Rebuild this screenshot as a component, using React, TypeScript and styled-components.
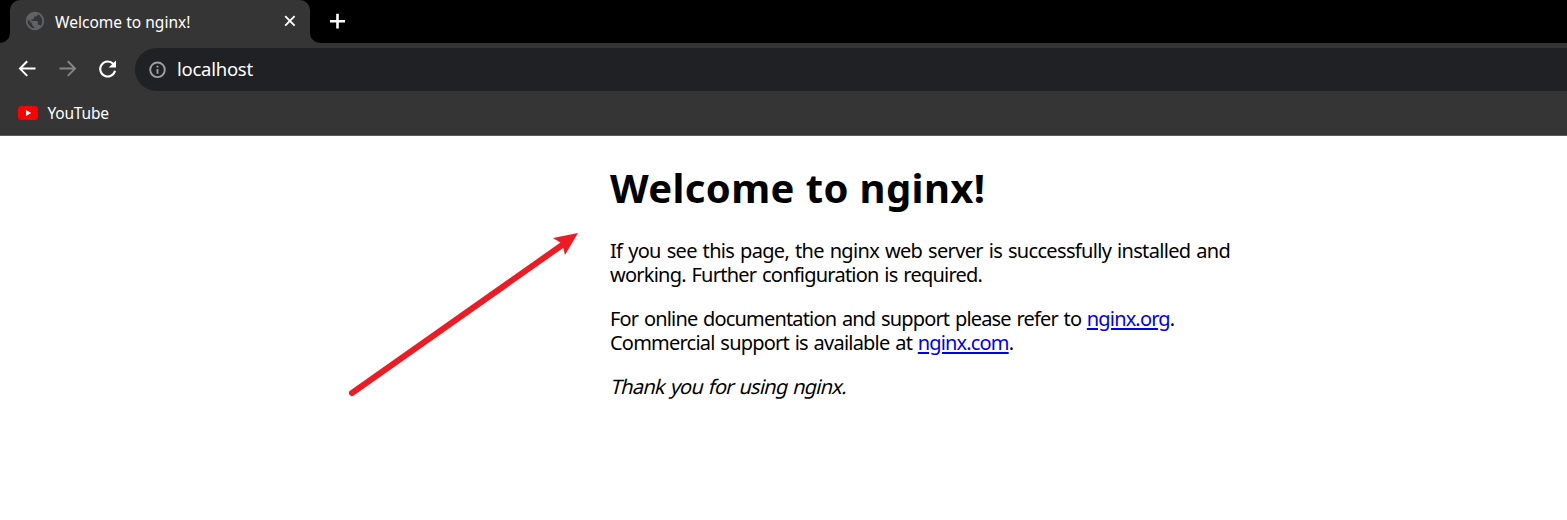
import React from "react";
import styled, { createGlobalStyle } from "styled-components";
import { MdPublic } from "react-icons/md";

const Global = createGlobalStyle`
  html, body { margin: 0; padding: 0; background: #fff; overflow: hidden; }
`;

const Browser = styled.div`
  position: relative;
  width: 100%;
  height: 520px;
  display: flex;
  flex-direction: column;
  background: #fff;
  font-family: "Noto Sans", sans-serif;
`;

const TabStrip = styled.div`
  height: 43px;
  display: flex;
  background: #000;
`;

const TabFoot = styled.svg`
  width: 10px;
  height: 10px;
  align-self: flex-end;
  display: block;
`;

const Tab = styled.div`
  box-sizing: border-box;
  width: 300px;
  height: 43px;
  padding: 0 13px 1px 14px;
  display: flex;
  align-items: center;
  background: #353535;
  border-radius: 10px 10px 0 0;
`;

const Globe = styled(MdPublic)`
  flex: none;
  width: 22px;
  height: 22px;
  color: #5f6368;
`;

const TabTitle = styled.span`
  flex: 1;
  margin-left: 9px;
  padding-top: 2px;
  font-size: 15.5px;
  line-height: 20px;
  letter-spacing: 0.03px;
  color: #fff;
  white-space: nowrap;
`;

const Icon = styled.svg`
  display: block;
  flex: none;
`;

const NewTab = styled.div`
  width: 34px;
  padding-bottom: 1px;
  display: flex;
  align-items: center;
  justify-content: center;
`;

const Toolbar = styled.div`
  height: 53px;
  display: flex;
  align-items: center;
  box-sizing: border-box;
  padding-left: 17px;
  background: #353535;
`;

const NavButtons = styled.div`
  width: 118px;
  padding-bottom: 2px;
  display: flex;
  gap: 20px;
`;

const AddressBar = styled.div`
  flex: 1;
  height: 43px;
  display: flex;
  align-items: center;
  box-sizing: border-box;
  padding-left: 13px;
  background: #202124;
  border-radius: 22px 0 0 22px;
`;

const Address = styled.span`
  margin-left: 11px;
  padding-bottom: 2px;
  font-size: 18.5px;
  line-height: 24px;
  letter-spacing: -0.25px;
  color: #fff;
`;

const Bookmarks = styled.div`
  height: 40px;
  box-sizing: border-box;
  display: flex;
  align-items: flex-start;
  padding: 7px 0 0 18px;
  background: #353535;
  border-bottom: 1px solid #5c5c5c;
`;

const Bookmark = styled.div`
  display: flex;
  align-items: center;
  gap: 9.5px;
  font-size: 15.5px;
  line-height: 20px;
  letter-spacing: -0.2px;
  color: #fff;
`;

const Page = styled.main`
  width: 700px;
  margin-left: 610px;
  padding-top: 28px;
  color: #000;
`;

const Heading = styled.h1`
  margin: 0 0 27px;
  font-size: 40px;
  line-height: 48px;
  font-weight: 700;
  letter-spacing: 0.38px;
  white-space: nowrap;
`;

const Paragraph = styled.p`
  margin: 0 0 20px;
  font-size: 20px;
  line-height: 24px;
  word-spacing: 1.3px;
`;

const Line = styled.span<{ $spacing: number }>`
  display: block;
  white-space: nowrap;
  letter-spacing: ${(p) => p.$spacing}px;
`;

/* Upright letterforms slanted, so that the thanks keeps the body face. */
const Slanted = styled.em`
  display: inline-block;
  font-style: normal;
  transform: skewX(-14deg);
  transform-origin: 0 18px;
`;

const Link = styled.a`
  color: #0000ee;
  letter-spacing: -0.85px;
  text-decoration: underline;
  text-decoration-thickness: 2px;
  text-underline-offset: 2px;
  text-decoration-skip-ink: auto;
`;

const Arrow = styled.svg`
  position: absolute;
  left: 340px;
  top: 225px;
`;

export default function App() {
  return (
    <Browser>
      <Global />
      <TabStrip>
        <TabFoot viewBox="0 0 10 10"><path d="M10 0A10 10 0 0 1 0 10H10Z" fill="#353535" /></TabFoot>
        <Tab>
          <Globe />
          <TabTitle>Welcome to nginx!</TabTitle>
          <Icon width="14" height="14" viewBox="0 0 14 14"><path d="M2.2 2.2l9.4 9.4M11.6 2.2l-9.4 9.4" stroke="#fff" strokeWidth="1.9" /></Icon>
        </Tab>
        <TabFoot viewBox="0 0 10 10"><path d="M0 0A10 10 0 0 0 10 10H0Z" fill="#353535" /></TabFoot>
        <NewTab>
          <Icon width="16" height="16" viewBox="0 0 16 16"><path d="M8.5 .8v14.8M1 8.2h15" stroke="#fff" strokeWidth="2.6" /></Icon>
        </NewTab>
      </TabStrip>
      <Toolbar>
        <NavButtons>
          <Icon width="20" height="20" viewBox="0 0 20 20"><path d="M18.5 9.6H3.6M10.2 2.3 3 9.6l7.2 7.3" fill="none" stroke="#fff" strokeWidth="2" /></Icon>
          <Icon width="20" height="20" viewBox="0 0 20 20"><path d="M2.5 9.6h14.9M10.8 2.3 18 9.6l-7.2 7.3" fill="none" stroke="#858585" strokeWidth="2" /></Icon>
          <Icon width="20" height="20" viewBox="0 0 20 20">
            <path d="M16.3 5A7.5 7.5 0 1 0 18 11.8" fill="none" stroke="#fff" strokeWidth="2.1" />
            <path d="M19 1.4v7.2h-7.3Z" fill="#fff" />
          </Icon>
        </NavButtons>
        <AddressBar>
          <Icon width="18" height="18" viewBox="0 0 18 18">
            <circle cx="9.5" cy="8.8" r="7.3" fill="none" stroke="#9aa0a6" strokeWidth="1.9" />
            <path d="M9.5 8v4.8M9.5 4.7v1.9" stroke="#9aa0a6" strokeWidth="1.9" />
          </Icon>
          <Address>localhost</Address>
        </AddressBar>
      </Toolbar>
      <Bookmarks>
        <Bookmark>
          <Icon width="20" height="14" viewBox="0 0 20 14">
            <rect width="20" height="14" rx="3.5" fill="#f00" />
            <path d="M8 4l5.2 3L8 10Z" fill="#fff" />
          </Icon>
          <span>YouTube</span>
        </Bookmark>
      </Bookmarks>
      <Page>
        <Heading>Welcome to nginx!</Heading>
        <Paragraph>
          <Line $spacing={-0.67}>If you see this page, the nginx web server is successfully installed and</Line>
          <Line $spacing={-0.77}>working. Further configuration is required.</Line>
        </Paragraph>
        <Paragraph>
          <Line $spacing={-0.83}>For online documentation and support please refer to <Link>nginx.org</Link>.</Line>
          <Line $spacing={-0.78}>Commercial support is available at <Link>nginx.com</Link>.</Line>
        </Paragraph>
        <Paragraph>
          <Line $spacing={-0.76}><Slanted>Thank you for using nginx.</Slanted></Line>
        </Paragraph>
      </Page>
      <Arrow width="245" height="180" viewBox="340 225 245 180">
        <path d="M352 393 565 243" stroke="#ed1c24" strokeWidth="6" strokeLinecap="round" />
        <path d="M578 233 553 238 561 243 563 247 565 255Z" fill="#ed1c24" />
      </Arrow>
    </Browser>
  );
}
